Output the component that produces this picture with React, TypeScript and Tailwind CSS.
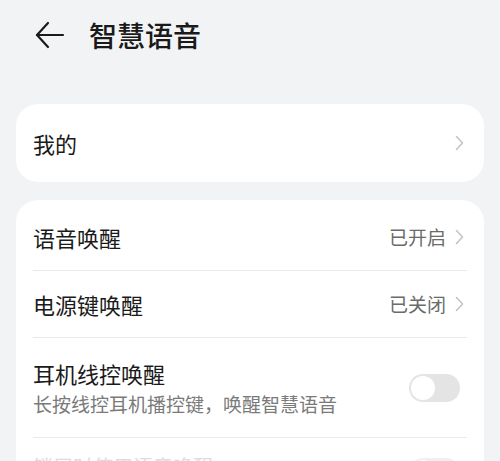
import React from "react";

const Chevron = () => (
  <svg width="9" height="16" viewBox="0 0 9 16" fill="none" className="shrink-0">
    <polyline points="1.5,1.5 7.5,8 1.5,14.5" stroke="#c4c4c4" strokeWidth="1.6" strokeLinecap="round" strokeLinejoin="round" />
  </svg>
);

const Toggle = ({ faded }: { faded?: boolean }) => (
  <div className={`w-[51px] h-[28px] rounded-full p-[2px] flex items-center ${faded ? "bg-[#efefef]" : "bg-[#e4e4e4]"}`}>
    <div className="w-[24px] h-[24px] rounded-full bg-white" />
  </div>
);

export default function App() {
  return (
    <div
      className="w-[500px] h-[461px] overflow-hidden bg-[#f2f3f5]"
      style={{ fontFamily: '"Noto Sans CJK SC", "Noto Sans", sans-serif' }}
    >
      <div className="h-[70px] flex items-center pl-[35px]">
        <svg width="30" height="28" viewBox="0 0 30 28" fill="none">
          <polyline points="13,2 2,14 13,26" stroke="#1a1a1a" strokeWidth="2.2" strokeLinecap="round" strokeLinejoin="round" />
          <line x1="2" y1="14" x2="28" y2="14" stroke="#1a1a1a" strokeWidth="2.2" strokeLinecap="round" />
        </svg>
        <div className="ml-[24px] text-[28px] leading-none font-medium text-[#1a1a1a]">智慧语音</div>
      </div>

      <div className="mx-[16px] mt-[34px] h-[78px] rounded-[22px] bg-white flex items-center justify-between pl-[17px] pr-[20px]">
        <span className="text-[22px] text-[#1a1a1a]">我的</span>
        <Chevron />
      </div>

      <div className="mx-[16px] mt-[18px] rounded-t-[22px] bg-white pt-[4px] px-[17px]">
        <div className="h-[67px] flex items-center justify-between border-b border-[#e9e9e9] pr-[3px]">
          <span className="text-[22px] text-[#1a1a1a]">语音唤醒</span>
          <div className="flex items-center gap-[9px]">
            <span className="text-[19px] text-[#6b6b6b]">已开启</span>
            <Chevron />
          </div>
        </div>
        <div className="h-[67px] flex items-center justify-between border-b border-[#e9e9e9] pr-[3px]">
          <span className="text-[22px] text-[#1a1a1a]">电源键唤醒</span>
          <div className="flex items-center gap-[9px]">
            <span className="text-[19px] text-[#6b6b6b]">已关闭</span>
            <Chevron />
          </div>
        </div>
        <div className="h-[100px] flex items-center justify-between border-b border-[#e9e9e9] pr-[7px]">
          <div className="flex flex-col">
            <span className="text-[22px] leading-[30px] text-[#1a1a1a]">耳机线控唤醒</span>
            <span className="text-[19px] leading-[28px] text-[#7a7a7a] mt-[2px]">长按线控耳机播控键，唤醒智慧语音</span>
          </div>
          <Toggle />
        </div>
        <div className="h-[67px] flex items-center justify-between pr-[7px]">
          <span className="text-[20px] text-[#dcdcdc] mt-[-10px]">锁屏时使用语音唤醒</span>
          <Toggle faded />
        </div>
      </div>
    </div>
  );
}
